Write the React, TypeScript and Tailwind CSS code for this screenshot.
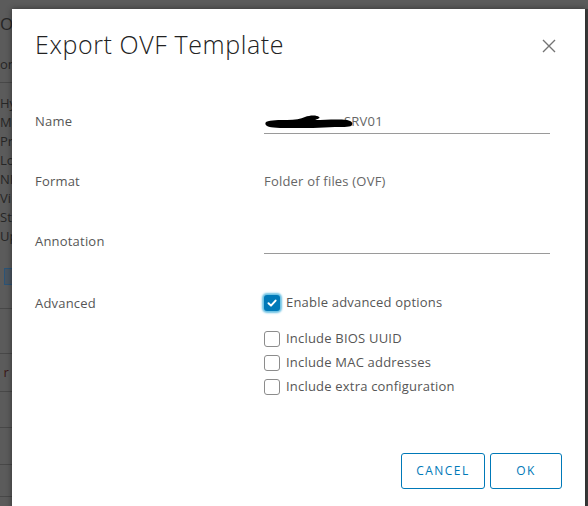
import React from "react";

function Check({ checked, label }: { checked?: boolean; label: string }) {
  return (
    <label className="flex items-center h-[24px] gap-[6px] text-[13px] text-[#565656]">
      {checked ? (
        <span className="w-[16px] h-[16px] rounded-[3px] bg-[#0079b8] shadow-[0_0_2px_2px_#6bc1e3] flex items-center justify-center">
          <svg width="12" height="12" viewBox="0 0 12 12">
            <path d="M2.5 6.2 L5 8.6 L9.6 3.6" stroke="#fff" strokeWidth="2" fill="none" strokeLinecap="round" strokeLinejoin="round" />
          </svg>
        </span>
      ) : (
        <span className="w-[16px] h-[16px] rounded-[3px] border border-[#8c8c8c] bg-white" />
      )}
      <span>{label}</span>
    </label>
  );
}

export default function App() {
  return (
    <div className="relative w-[588px] h-[506px] overflow-hidden bg-[#5b5b5b] font-['Open_Sans',sans-serif]">
      {/* page behind the modal */}
      <div className="flex h-full">
        <aside className="w-[12px] overflow-hidden text-[#262626] text-[13px] whitespace-nowrap flex flex-col">
          <div className="h-[12px]" />
          <div className="h-[24px] leading-[24px] text-[17px]">O</div>
          <div className="h-[18px]" />
          <div className="h-[20px] leading-[20px]">on</div>
          <div className="h-[9px] border-b border-[#484848]" />
          <div className="h-[11px]" />
          {["Hy", "Mo", "Pr", "Lo", "NI", "Vi", "St", "Up"].map((t) => (
            <div key={t} className="h-[19px] leading-[19px]">{t}</div>
          ))}
          <div className="h-[22px]" />
          <div className="h-[19px] w-[12px] pl-[4px]">
            <div className="w-[12px] h-[17px] border border-[#2b5477] bg-[#4a5560]" />
          </div>
          <div className="h-[22px] border-b border-[#484848]" />
          <div className="h-[45px] border-b border-[#484848]" />
          <div className="h-[38px] border-b border-[#484848] flex items-center text-[#3a1616]">&nbsp;r</div>
          <div className="h-[36px] border-b border-[#484848]" />
          <div className="h-[37px] border-b border-[#484848]" />
          <div className="h-[32px] border-b border-[#484848]" />
        </aside>
        <div className="flex-1" />
        <div className="w-[3px] mt-[9px] bg-[#3e3e3e]" />
      </div>

      {/* modal */}
      <div className="absolute left-[12px] top-[9px] w-[573px] h-[520px] bg-white shadow-[0_0_6px_rgba(0,0,0,0.45)] flex flex-col">
        <div className="flex items-center justify-between pl-[23px] pr-[29px] pt-[20px]">
          <h1 className="text-[25px] leading-[30px] font-light tracking-[0.6px] text-[#222]">Export OVF Template</h1>
          <svg width="14" height="14" viewBox="0 0 14 14" className="mt-[4px]">
            <path d="M1 1 L13 13 M13 1 L1 13" stroke="#747474" strokeWidth="1.4" />
          </svg>
        </div>

        <div className="pt-[33px] pl-[23px] text-[13px] tracking-[0.2px] text-[#565656]">
          <div className="flex h-[60px] items-center">
            <div className="w-[229px]">Name</div>
            <div className="w-[286px] h-[24px] border-b border-[#9a9a9a] flex items-center text-[#666]">
              <svg width="88" height="16" viewBox="0 0 88 16" className="relative z-10 shrink-0 -mr-[9px] ml-[1px]">
                <path d="M1 8 C6 6 14 6 22 6 C30 6 36 5 40 3 C45 1 52 1 54 3 C56 4 52 5 50 6 C60 6 72 5 82 6 C87 7 88 9 87 11 C86 13 80 13 70 13 C56 14 40 14 26 14 C16 14 6 14 2 12 C0 11 0 9 1 8 Z" fill="#000" />
              </svg>
              <span>SRV01</span>
            </div>
          </div>
          <div className="flex h-[60px] items-center">
            <div className="w-[229px]">Format</div>
            <div className="text-[#666]">Folder of files (OVF)</div>
          </div>
          <div className="flex h-[60px] items-center">
            <div className="w-[229px]">Annotation</div>
            <div className="w-[286px] h-[24px] border-b border-[#9a9a9a]" />
          </div>
          <div className="flex pt-[19px]">
            <div className="w-[229px] leading-[24px]">Advanced</div>
            <div className="flex flex-col">
              <Check checked label="Enable advanced options" />
              <div className="h-[12px]" />
              <Check label="Include BIOS UUID" />
              <Check label="Include MAC addresses" />
              <Check label="Include extra configuration" />
            </div>
          </div>
        </div>

        <div className="flex justify-end gap-[5px] pr-[23px] mt-[54px]">
          <button className="w-[84px] h-[36px] rounded-[3px] border border-[#0079b8] text-[#0079b8] text-[12px] font-medium tracking-[0.12em]">
            CANCEL
          </button>
          <button className="w-[72px] h-[36px] rounded-[3px] border border-[#0079b8] text-[#0079b8] text-[12px] font-medium tracking-[0.12em]">
            OK
          </button>
        </div>
      </div>
    </div>
  );
}
